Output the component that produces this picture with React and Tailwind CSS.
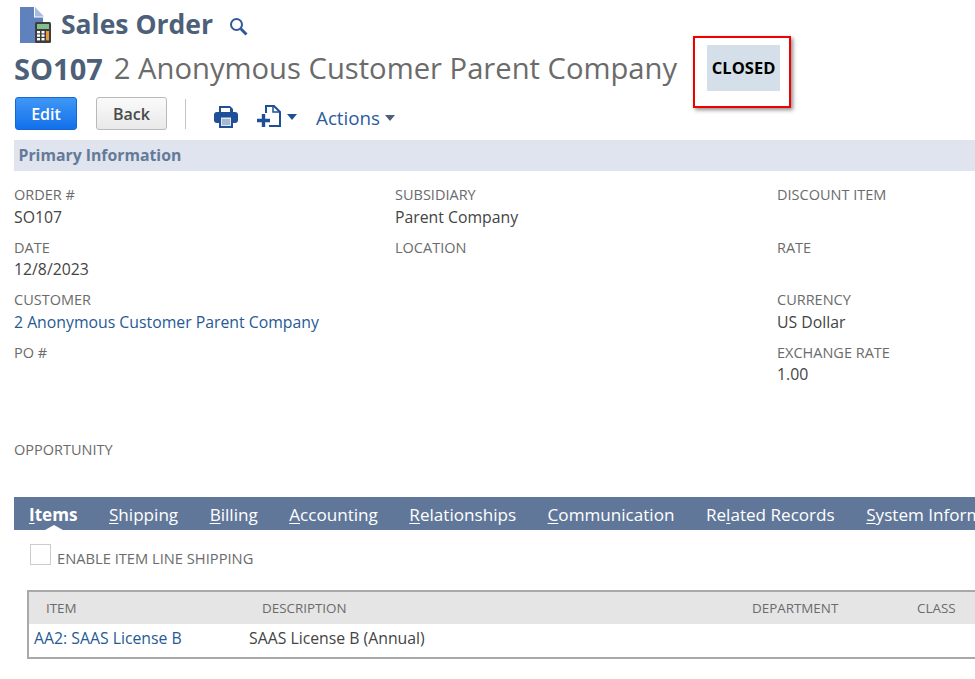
const leftFields = [
  { label: "ORDER #", value: "SO107" },
  { label: "DATE", value: "12/8/2023" },
  { label: "CUSTOMER", value: "2 Anonymous Customer Parent Company", link: true },
  { label: "PO #" },
];

const middleFields = [
  { label: "SUBSIDIARY", value: "Parent Company" },
  { label: "LOCATION" },
];

const rightFields = [
  { label: "DISCOUNT ITEM" },
  { label: "RATE" },
  { label: "CURRENCY", value: "US Dollar" },
  { label: "EXCHANGE RATE", value: "1.00" },
];

const tabs = [
  { key: "I", rest: "tems", active: true },
  { key: "S", rest: "hipping" },
  { key: "B", rest: "illing" },
  { key: "A", rest: "ccounting" },
  { key: "R", rest: "elationships" },
  { key: "C", rest: "ommunication" },
  { pre: "Re", key: "l", rest: "ated Records" },
  { key: "S", rest: "ystem Information" },
];

function RecordIcon() {
  return (
    <svg width="32" height="36" viewBox="0 0 32 36" className="shrink-0">
      <path d="M1 1.5a1 1 0 0 1 1-1h13v11h9v28H2a1 1 0 0 1-1-1z" fill="#5f82bf" transform="translate(0 -1)" />
      <path d="M16 0l9 9.5h-9z" fill="#a9bcdc" />
      <rect x="16" y="15" width="16" height="21" rx="1.5" fill="#3d3d3d" />
      <rect x="18" y="17" width="12" height="5" fill="#7fc08d" />
      <g fill="#fff">
        <rect x="18" y="24" width="3" height="2.4" />
        <rect x="22.5" y="24" width="3" height="2.4" />
        <rect x="18" y="27.4" width="3" height="2.4" />
        <rect x="22.5" y="27.4" width="3" height="2.4" />
        <rect x="18" y="31" width="3" height="2.4" />
        <rect x="22.5" y="31" width="3" height="2.4" />
      </g>
      <rect x="27" y="24" width="3" height="9.4" fill="#e8973a" />
    </svg>
  );
}

function SearchIcon() {
  return (
    <svg width="19" height="19" viewBox="0 0 19 19" fill="none" stroke="#2f5a97" className="shrink-0">
      <circle cx="7.5" cy="7.5" r="5.5" strokeWidth="2" />
      <path d="M11.8 11.8L17.5 17.5" strokeWidth="3" />
    </svg>
  );
}

function PrintIcon() {
  return (
    <svg width="24" height="22" viewBox="0 0 24 22">
      <path d="M5 0h11l3 3v5H5z" fill="#1f4f96" />
      <rect x="7" y="2" width="9" height="5" fill="#fff" />
      <rect x="0" y="6" width="24" height="11" rx="3" fill="#1f4f96" />
      <rect x="5" y="10" width="14" height="12" fill="#1f4f96" />
      <rect x="7" y="11.5" width="10" height="8.5" fill="#dfe6f0" />
      <path d="M8 14h8M8 16h8M8 18h8" stroke="#6f8bb5" strokeWidth="1" />
    </svg>
  );
}

function NewRecordIcon() {
  return (
    <svg width="24" height="23" viewBox="0 0 24 23" fill="none">
      <path d="M9 8V1h8l6 6v14H12" stroke="#1f4f96" strokeWidth="2" />
      <path d="M16 1v6h7" stroke="#1f4f96" strokeWidth="1.5" />
      <path d="M0 15.5h13M6.5 9v13" stroke="#1f4f96" strokeWidth="3.4" />
    </svg>
  );
}

function Caret({ color }) {
  return (
    <svg width="10" height="6" viewBox="0 0 10 6">
      <path d="M0 0h10L5 6z" fill={color} />
    </svg>
  );
}

function Field({ label, value, link }) {
  return (
    <div className="h-[52.5px]">
      <div className="text-[14.5px] leading-[22px] text-[#6b6b6b]">{label}</div>
      {value && (
        <div className={`-mt-[0.5px] text-[15.8px] leading-[22px] ${link ? "text-[#255a94]" : "text-[#444444]"}`}>
          {value}
        </div>
      )}
    </div>
  );
}

export default function App() {
  return (
    <div className="h-[679px] w-[975px] overflow-hidden bg-white pt-2 font-['Open_Sans',sans-serif]">

      {/* page title */}
      <div className="flex h-[34px] items-center pl-[19px]">
        <RecordIcon />
        <h1 className="ml-[10px] -mt-[2px] text-[26.5px] font-bold leading-[34px] text-[#4d5f79]">Sales Order</h1>
        <div className="ml-[16px] mt-[2px]">
          <SearchIcon />
        </div>
      </div>

      {/* record name + status */}
      <div className="-mt-[6px] flex h-[72px] items-center pl-[14px]">
        <span className="mt-[-6px] text-[29px] font-bold text-[#4d5f79]">SO107</span>
        <span className="ml-[11px] mt-[-6px] whitespace-nowrap text-[29.2px] text-[#6b6b6b]">
          2 Anonymous Customer Parent Company
        </span>
        <div className="ml-[16px] h-[72px] w-[98px] border-[2px] border-[#f00000] pl-3 pt-[7px] shadow-[2px_2px_4px_rgba(0,0,0,0.45)]">
          <div className="flex h-[46px] w-[73px] items-center justify-center bg-[#d5dfe9] text-[16.5px] font-bold text-black">
            CLOSED
          </div>
        </div>
      </div>

      {/* toolbar */}
      <div className="-mt-[11px] flex h-[33px] items-center pl-[15px]">
        <button className="h-[33px] w-[62px] rounded-[3px] border border-[#1467d6] bg-gradient-to-b from-[#3f97f5] to-[#1170ea] text-[16px] font-semibold text-white">
          Edit
        </button>
        <button className="ml-[19px] h-[33px] w-[71px] rounded-[3px] border-[1.5px] border-[#b9b9b9] bg-gradient-to-b from-[#fafafa] to-[#e9e9e9] text-[16px] font-semibold text-[#4a4a4a]">
          Back
        </button>
        <div className="ml-[18px] h-[30px] w-px bg-[#c4c4c4]" />
        <div className="ml-[28px] mt-[6px]">
          <PrintIcon />
        </div>
        <div className="ml-[19px] mt-[6px]">
          <NewRecordIcon />
        </div>
        <div className="ml-[6px] mt-[6px]">
          <Caret color="#1f4f96" />
        </div>
        <span className="ml-[19px] mt-[9px] text-[18.8px] text-[#2b5c9e]">Actions</span>
        <div className="ml-[5px] mt-[9px]">
          <Caret color="#4d5f79" />
        </div>
      </div>

      {/* primary information */}
      <div className="ml-[14px] mt-[10px] flex h-[31px] items-center bg-[#dfe4ee] pl-[4.5px] pt-[1px] text-[15.8px] font-bold text-[#647a99]">
        Primary Information
      </div>

      <div className="mt-[13px] flex pl-[14px]">
        <div className="w-[381px]">
          {leftFields.map((f) => (
            <Field key={f.label} {...f} />
          ))}
          <div className="mt-[45px]">
            <Field label="OPPORTUNITY" />
          </div>
        </div>
        <div className="w-[382px]">
          {middleFields.map((f) => (
            <Field key={f.label} {...f} />
          ))}
        </div>
        <div>
          {rightFields.map((f) => (
            <Field key={f.label} {...f} />
          ))}
        </div>
      </div>

      {/* tabs */}
      <div className="relative mt-[5px] ml-[14px] flex h-[33px] items-center gap-[31.5px] whitespace-nowrap bg-[#607799] pl-[15px] pt-[3px] text-[17.1px] text-white">
        {tabs.map((t) => (
          <span key={t.rest} className={t.active ? "relative font-bold" : ""}>
            {t.pre}
            <span className="underline underline-offset-2">{t.key}</span>
            {t.rest}
            {t.active && (
              <span className="absolute -bottom-[3px] left-[16px] border-x-[9px] border-b-[5px] border-x-transparent border-b-white" />
            )}
          </span>
        ))}
      </div>

      {/* item line shipping */}
      <div className="mt-[14px] flex pl-[30px]">
        <div className="h-[21px] w-[21px] border border-[#cccccc] bg-white" />
        <span className="ml-[6px] mt-[3px] text-[14.7px] leading-[22px] text-[#6b6b6b]">
          ENABLE ITEM LINE SHIPPING
        </span>
      </div>

      {/* items table */}
      <div className="ml-[27px] mt-[21px] w-[960px] border-2 border-[#a9a9a9]">
        <div className="flex h-[32px] items-center bg-[#e5e5e5] pt-[2px] text-[13.4px] text-[#6b6b6b]">
          <span className="ml-[17px] w-[216px]">ITEM</span>
          <span className="w-[490px]">DESCRIPTION</span>
          <span className="w-[165px]">DEPARTMENT</span>
          <span>CLASS</span>
        </div>
        <div className="flex h-[33px] items-center pb-[2px] text-[15.8px]">
          <span className="ml-[5px] w-[215px] text-[#255a94]">AA2: SAAS License B</span>
          <span className="text-[#444444]">SAAS License B (Annual)</span>
        </div>
      </div>

    </div>
  );
}
